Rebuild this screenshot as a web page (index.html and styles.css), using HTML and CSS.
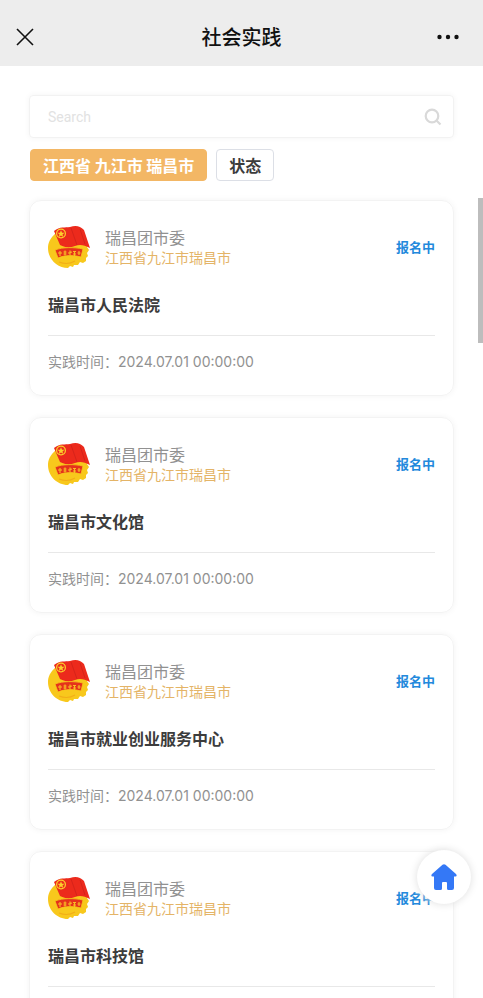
FILE: index.html
```html
<!DOCTYPE html>
<html lang="zh-CN">
<head>
<meta charset="utf-8">
<meta name="viewport" content="width=device-width, initial-scale=1">
<title>社会实践</title>
<link rel="stylesheet" href="styles.css">
</head>
<body>
<svg class="defs" aria-hidden="true">
  <symbol id="emblem" viewBox="0 0 42 42">
    <path fill="#f8c81c" d="M8 7C2 12 0 17 0 22c0 11 9 20 20 20l2-2 3 1 1-2 4 0 2-3 3 1 3-2 0-3 2-2-1-3 2-3-2-3 1-3-5-4z"/>
    <path fill="#ec2a1c" d="M6 5C12 0 17 2 22 1c6-2 10-1 14 3l6 18c-6-3-10-4-15-2-5 2-9 2-15-1z"/>
    <path fill="none" stroke="#d6231a" stroke-width="1" d="M23 2l6 17M32 3l5 15"/>
    <circle cx="13" cy="7.500" r="4.400" fill="none" stroke="#fbd02c" stroke-width="1.200"/>
    <path fill="#fbd02c" d="M13 4.200l1 2.500 2.500 0-2 1.700.8 2.500-2.300-1.500-2.300 1.500.8-2.500-2-1.700 2.500 0z"/>
    <path fill="#e5321b" stroke="#f8c81c" stroke-width=".8" d="M7 24c8-3 19-3 28-1l-2 8c-8-2-16-2-23 1z"/>
    <path fill="none" stroke="#f9bd24" stroke-width="1.100" d="M12 25v5M10 27h4M17 24.500v5M15.500 26h3M15.500 28h3M22 24.500v5M20 27l4-1M26.500 25v5M25 25.500h3M25 28h3M31 25v4M29.500 27h3"/>
    <path fill="none" stroke="#f2ae18" stroke-width="1.200" d="M11 36c5 2 11 2 16-1"/>
  </symbol>
</svg>
<div class="app">
  <header class="topbar">
    <button class="icon-button" type="button" aria-label="关闭">
      <svg width="18" height="18" viewBox="0 0 18 18"><path d="M1 1l16 16M17 1L1 17" fill="none" stroke="#111" stroke-width="1.600"/></svg>
    </button>
    <h1>社会实践</h1>
    <button class="icon-button more" type="button" aria-label="更多">
      <svg width="22" height="6" viewBox="0 0 22 6" fill="#111"><circle cx="2.500" cy="3" r="2.200"/><circle cx="11" cy="3" r="2.200"/><circle cx="19.500" cy="3" r="2.200"/></svg>
    </button>
  </header>
  <main>
    <form class="search">
      <input type="search" placeholder="Search" aria-label="Search">
      <button class="icon-button" type="button" aria-label="搜索">
        <svg width="18" height="18" viewBox="0 0 18 18" fill="none" stroke="#d9d9d9" stroke-width="2.200"><circle cx="8" cy="8" r="6.300"/><path d="M12 12l4.500 4.500"/></svg>
      </button>
    </form>
    <div class="filters">
      <button class="chip chip-active" type="button">江西省 九江市 瑞昌市</button>
      <button class="chip" type="button">状态</button>
    </div>
    <article class="card">
      <div class="org">
        <svg class="logo" aria-hidden="true"><use href="#emblem"/></svg>
        <div class="org-text"><p class="name">瑞昌团市委</p><p class="place">江西省九江市瑞昌市</p></div>
        <span class="status">报名中</span>
      </div>
      <h2>瑞昌市人民法院</h2>
      <p class="time">实践时间：<time>2024.07.01 00:00:00</time></p>
    </article>
    <article class="card">
      <div class="org">
        <svg class="logo" aria-hidden="true"><use href="#emblem"/></svg>
        <div class="org-text"><p class="name">瑞昌团市委</p><p class="place">江西省九江市瑞昌市</p></div>
        <span class="status">报名中</span>
      </div>
      <h2>瑞昌市文化馆</h2>
      <p class="time">实践时间：<time>2024.07.01 00:00:00</time></p>
    </article>
    <article class="card">
      <div class="org">
        <svg class="logo" aria-hidden="true"><use href="#emblem"/></svg>
        <div class="org-text"><p class="name">瑞昌团市委</p><p class="place">江西省九江市瑞昌市</p></div>
        <span class="status">报名中</span>
      </div>
      <h2>瑞昌市就业创业服务中心</h2>
      <p class="time">实践时间：<time>2024.07.01 00:00:00</time></p>
    </article>
    <article class="card">
      <div class="org">
        <svg class="logo" aria-hidden="true"><use href="#emblem"/></svg>
        <div class="org-text"><p class="name">瑞昌团市委</p><p class="place">江西省九江市瑞昌市</p></div>
        <span class="status">报名中</span>
      </div>
      <h2>瑞昌市科技馆</h2>
    </article>
  </main>
</div>
<div class="scroll-thumb"></div>
<a class="home" href="#" aria-label="首页">
  <svg width="26" height="26" viewBox="0 0 26 26"><path fill="#3478f6" d="M11.500.8q1.500-1.200 3 0L25 10q1.500 2-.5 2.500H23V24q0 2-2 2h-3.500q-1.500 0-1.500-1.500V19q0-1-1-1h-3q-1 0-1 1v5.500q0 1.500-1.500 1.500H5q-2 0-2-2V12.500H1.500q-2-.5-.5-2.500z"/></svg>
</a>
</body>
</html>
```
FILE: styles.css
```css
* {
  box-sizing: border-box;
}

body {
  margin: 0;
  background: #fff;
  color: #3c3c3c;
  font-family: "Noto Sans CJK SC", sans-serif;
}

h1,
h2,
p {
  margin: 0;
}

button,
input {
  font: inherit;
  color: inherit;
}

.defs {
  position: absolute;
  width: 0;
  height: 0;
}

.app {
  height: 100vh;
  overflow: hidden;
}

.topbar {
  display: grid;
  grid-template-columns: 1fr auto 1fr;
  align-items: center;
  height: 66px;
  padding: 8px 16px 0;
  background: #ededed;
}

.topbar h1 {
  color: #111;
  font-size: 20px;
  font-weight: 500;
  line-height: 30px;
}

.icon-button {
  display: flex;
  padding: 0;
  border: 0;
  background: none;
}

.more {
  justify-self: end;
  padding: 8px;
}

main {
  padding: 29px 29px 24px;
}

.search {
  display: flex;
  align-items: center;
  height: 43px;
  padding: 0 11px 0 18px;
  border: 1px solid #f2f2f2;
  border-radius: 4px;
  box-shadow: 0 0 6px #f4f4f4;
}

.search input {
  flex: 1;
  min-width: 0;
  padding: 0;
  border: 0;
  outline: 0;
  background: none;
  font-family: Roboto, "Noto Sans CJK SC", sans-serif;
  font-size: 14px;
}

.search input::placeholder {
  color: #e2e2e2;
}

.filters {
  display: flex;
  gap: 9px;
  margin: 11px 1px 19px;
}

.chip {
  height: 32px;
  padding: 0 12px;
  border: 1px solid #dcdfe6;
  border-radius: 4px;
  background: #fff;
  font-size: 16px;
  font-weight: 700;
  line-height: 30px;
}

.chip-active {
  border-color: #f3b765;
  background: #f3b765;
  color: #fff;
}

.card {
  margin-bottom: 21px;
  padding: 25px 18px 21px;
  border: 1px solid #f3f3f3;
  border-radius: 12px;
  box-shadow: 0 0 6px #f3f3f3;
}

.org {
  display: flex;
  align-items: center;
}

.logo {
  flex: none;
  width: 42px;
  height: 42px;
  margin-right: 15px;
}

.org-text {
  flex: 1;
}

.name {
  color: #919191;
  font-size: 16px;
  line-height: 20px;
}

.place {
  color: #e4b467;
  font-size: 14px;
  line-height: 20px;
}

.status {
  color: #2389dc;
  font-size: 13px;
  font-weight: 700;
  line-height: 20px;
}

.card h2 {
  padding: 24px 0 19px;
  border-bottom: 1px solid #e8e8e8;
  font-size: 16px;
  font-weight: 700;
  line-height: 24px;
}

.time {
  padding-top: 13px;
  color: #919191;
  font-size: 14px;
  line-height: 24px;
}

.time time {
  font-family: Inter, sans-serif;
}

.card:last-child {
  padding-bottom: 58px;
}

.scroll-thumb {
  position: fixed;
  top: 198px;
  right: 0;
  width: 5px;
  height: 145px;
  background: #bdbdbd;
}

.home {
  position: fixed;
  right: 12px;
  bottom: 94px;
  display: flex;
  align-items: center;
  justify-content: center;
  width: 54px;
  height: 54px;
  border-radius: 50%;
  background: #fff;
  box-shadow: 0 0 8px #dedede;
}
```
